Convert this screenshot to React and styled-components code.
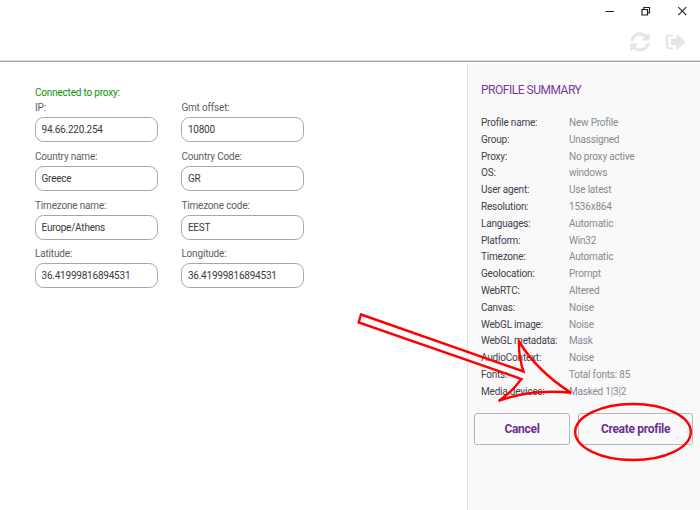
import React from "react";
import styled, { createGlobalStyle } from "styled-components";

const GlobalStyle = createGlobalStyle`
  * { box-sizing: border-box; }
  body { margin: 0; background: #fff; overflow: hidden; font-family: Roboto, sans-serif; }
`;

const Window = styled.div`
  position: relative;
  width: 700px;
  height: 510px;
  display: flex;
  flex-direction: column;
  overflow: hidden;
`;

const Header = styled.header`
  height: 62px;
  flex: none;
  display: flex;
  flex-direction: column;
  align-items: flex-end;
  border-bottom: 1px solid #a5a2ac;
  box-shadow: 0 -1px 0 #dfdde4 inset;
`;

const WindowControls = styled.div`
  display: flex;
  gap: 26px;
  padding: 6px 13px 0 0;
  height: 32px;
`;

const HeaderActions = styled.div`
  display: flex;
  gap: 15px;
  padding-right: 14px;
`;

const Body = styled.div`
  flex: 1;
  display: flex;
  min-height: 0;
`;

const Main = styled.main`
  flex: 1;
  padding: 24px 0 0 35px;
`;

const Status = styled.div`
  color: #0b910b;
  font-size: 10px;
  line-height: 13px;
  height: 15px;
  letter-spacing: -0.2px;
`;

const Fields = styled.div`
  display: grid;
  grid-template-columns: 123px 123px;
  column-gap: 23.4px;
  row-gap: 7.8px;
`;

const Field = styled.label`
  display: flex;
  flex-direction: column;
  height: 41px;
`;

const FieldLabel = styled.span`
  color: #5e5e5e;
  font-size: 10px;
  line-height: 14px;
  height: 16px;
  letter-spacing: -0.18px;
`;

const Input = styled.span`
  display: flex;
  align-items: center;
  height: 25px;
  padding: 0 0 0 5.5px;
  border: 1px solid #a6a6a6;
  border-radius: 8.5px;
  color: #3c3c3c;
  font-size: 10px;
  letter-spacing: -0.22px;
`;

const Summary = styled.aside`
  width: 233px;
  margin-top: 2px;
  border-left: 1px solid #e2e3e6;
  background: #f9f9f9;
  padding: 18px 6px 0 6px;
`;

const Title = styled.h2`
  margin: 0 0 17px 7px;
  color: #7a3a9b;
  font-size: 12px;
  line-height: 17px;
  height: 16px;
  font-weight: 400;
  letter-spacing: -0.48px;
`;

const Rows = styled.dl`
  margin: 0 0 0 7px;
`;

const Row = styled.div`
  display: grid;
  grid-template-columns: 88px 1fr;
  height: 16.8px;
  align-items: center;
  font-size: 10px;
  line-height: 12.6px;
  letter-spacing: -0.2px;
  white-space: nowrap;
`;

const Term = styled.dt`
  color: #3f414f;
`;

const Value = styled.dd`
  margin: 0;
  color: #858b93;
`;

const Buttons = styled.div`
  display: flex;
  gap: 8px;
  margin-top: 12.5px;
`;

const Button = styled.button`
  width: ${(p) => p.$width}px;
  height: 32px;
  padding: 0;
  border: 1px solid #b5b4c2;
  border-radius: 3px;
  background: #fafafa;
  color: #6b3091;
  font: 700 12px Roboto, sans-serif;
  letter-spacing: -0.3px;
`;

const Annotations = styled.svg`
  position: absolute;
  inset: 0;
  pointer-events: none;
`;

const fields = [
  ["IP:", "94.66.220.254"],
  ["Gmt offset:", "10800"],
  ["Country name:", "Greece"],
  ["Country Code:", "GR"],
  ["Timezone name:", "Europe/Athens"],
  ["Timezone code:", "EEST"],
  ["Latitude:", "36.41999816894531"],
  ["Longitude:", "36.41999816894531"],
];

const rows = [
  ["Profile name:", "New Profile"],
  ["Group:", "Unassigned"],
  ["Proxy:", "No proxy active"],
  ["OS:", "windows"],
  ["User agent:", "Use latest"],
  ["Resolution:", "1536x864"],
  ["Languages:", "Automatic"],
  ["Platform:", "Win32"],
  ["Timezone:", "Automatic"],
  ["Geolocation:", "Prompt"],
  ["WebRTC:", "Altered"],
  ["Canvas:", "Noise"],
  ["WebGL image:", "Noise"],
  ["WebGL metadata:", "Mask"],
  ["AudioContext:", "Noise"],
  ["Fonts:", "Total fonts: 85"],
  ["Media devices:", "Masked 1|3|2"],
];

function MinimizeIcon() {
  return (
    <svg width="10" height="10" fill="none" stroke="#222">
      <path d="M.5 5.500h8.500" />
    </svg>
  );
}

function RestoreIcon() {
  return (
    <svg width="10" height="10" fill="none" stroke="#222" strokeWidth="1.2">
      <path d="M1 3.500h5.500v5.500h-5.500zM2.800 3V1.500h5.700v5.500H7" />
    </svg>
  );
}

function CloseIcon() {
  return (
    <svg width="10" height="10" fill="none" stroke="#222" strokeWidth="1.1">
      <path d="M1.300 1.200l8 8M9.300 1.200l-8 8" />
    </svg>
  );
}

function RefreshIcon() {
  return (
    <svg width="20" height="20" viewBox="0 0 512 512" fill="#e2e6e8">
      <path d="M370.7 133.3C339.5 104 298.9 88 255.8 88c-77.5 0-144.3 53.2-162.8 126.9-1.3 5.400-6.100 9.200-11.700 9.200H24.100c-7.500 0-13.200-6.800-11.800-14.200C33.900 94.900 134.800 8 256 8c66.400 0 126.800 26.100 171.300 68.700L463 41c15.100-15.100 41-4.400 41 17v134c0 13.300-10.700 24-24 24H346c-21.400 0-32.100-25.900-17-41l41.700-41.700zM32 296h134c21.400 0 32.100 25.900 17 41l-41.800 41.800c31.300 29.300 71.800 45.300 114.900 45.300 77.400-.1 144.300-53.100 162.800-126.900 1.300-5.400 6.100-9.200 11.700-9.200h57.300c7.500 0 13.200 6.800 11.800 14.200C478.100 417.100 377.200 504 256 504c-66.400 0-126.800-26.100-171.300-68.700L49 471c-15.100 15.100-41 4.400-41-17V320c0-13.300 10.700-24 24-24z" />
    </svg>
  );
}

function LogoutIcon() {
  return (
    <svg width="21" height="20" viewBox="0 0 21 20">
      <path d="M8 3.500H4.500Q2 3.500 2 6v8q0 2.500 2.500 2.500H8" fill="none" stroke="#e2e6e8" strokeWidth="2.200" />
      <path d="M6.800 6.800h4.700V3.200q.2-1 1.200-.3l7.300 6.600q.5.500 0 1L12.700 17.100q-1 .6-1.200-.4v-3.500h-4.700q-.8 0-.8-.8V7.600q0-.8.8-.8z" fill="#e2e6e8" />
    </svg>
  );
}

export default function App() {
  return (
    <Window>
      <GlobalStyle />
      <Header>
        <WindowControls>
          <MinimizeIcon />
          <RestoreIcon />
          <CloseIcon />
        </WindowControls>
        <HeaderActions>
          <RefreshIcon />
          <LogoutIcon />
        </HeaderActions>
      </Header>
      <Body>
        <Main>
          <Status>Connected to proxy:</Status>
          <Fields>
            {fields.map(([label, value]) => (
              <Field key={label}>
                <FieldLabel>{label}</FieldLabel>
                <Input>{value}</Input>
              </Field>
            ))}
          </Fields>
        </Main>
        <Summary>
          <Title>PROFILE SUMMARY</Title>
          <Rows>
            {rows.map(([term, value]) => (
              <Row key={term}>
                <Term>{term}</Term>
                <Value>{value}</Value>
              </Row>
            ))}
          </Rows>
          <Buttons>
            <Button $width={96}>Cancel</Button>
            <Button $width={115}>Create profile</Button>
          </Buttons>
        </Summary>
      </Body>
      <Annotations width="700" height="510" fill="none" stroke="#f00" strokeWidth="2.4">
        <path d="M361 314.500L523.500 371.500Q518.500 357 519 341.500Q537 371 571 392.800Q531 388.500 498.500 401Q511 393 521.500 379L358.700 322.500Z" />
        <ellipse cx="633" cy="432" rx="57.800" ry="28" />
      </Annotations>
    </Window>
  );
}
